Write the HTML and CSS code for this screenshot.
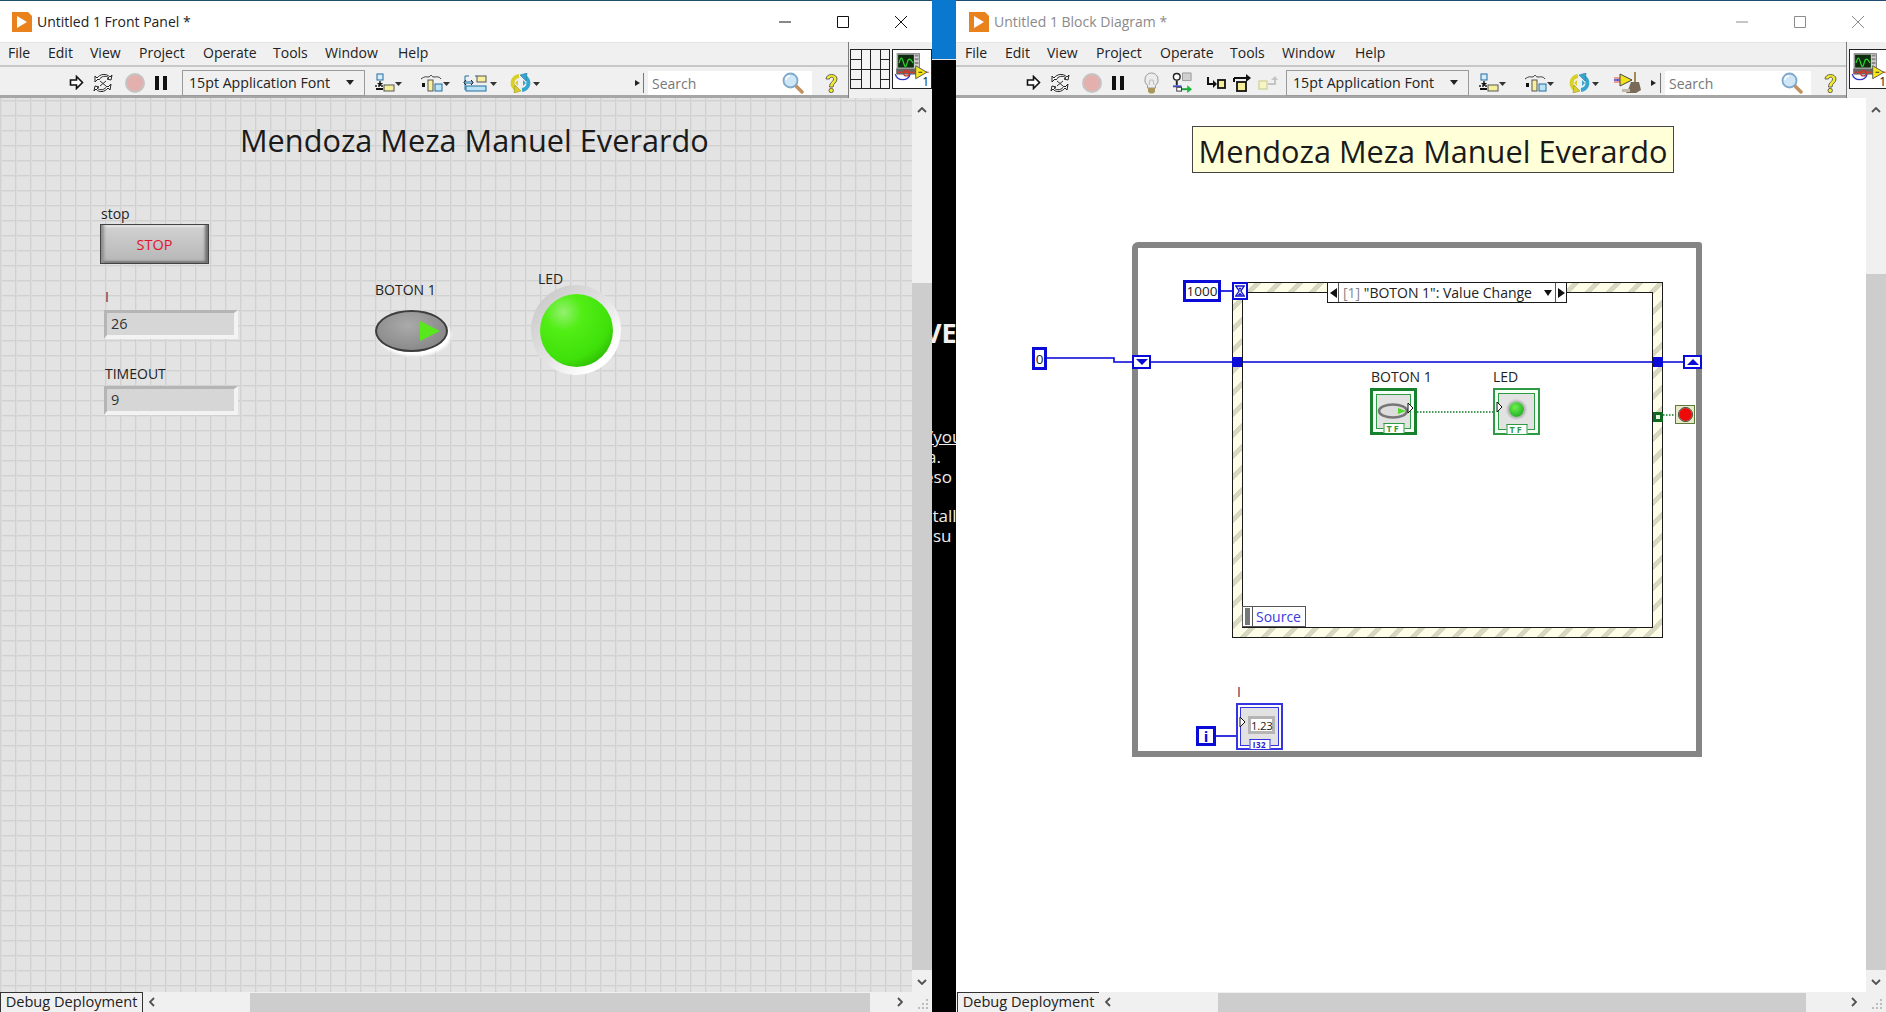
FILE: index.html
```html
<!DOCTYPE html>
<html lang="en">
<head>
<meta charset="utf-8">
<title>LabVIEW</title>
<link rel="stylesheet" href="styles.css">
</head>
<body>
<svg class="defs" width="0" height="0" aria-hidden="true">
  <defs>
    <symbol id="i-app" viewBox="0 0 20 20"><path d="M0 0h16l4 4v16H0z" fill="#e9821c"/><path d="M5 4l10 6-10 6z" fill="#fff"/></symbol>
    <symbol id="i-run" viewBox="0 0 15 15"><path d="M1.5 5h6V1.500l6 6-6 6V10h-6z" fill="#fff" stroke="#111" stroke-width="1.600"/></symbol>
    <symbol id="i-cont" viewBox="0 0 20 20"><path d="M2 9l3-3 1 1C8 3 13 2 16 5l-2 1 4 1 1-5-2 2C13 0 7 1 4 5L2 3z" fill="#fff" stroke="#222"/><path d="M18 11l-3 3-1-1c-2 4-7 5-10 2l2-1-4-1-1 5 2-2c3 4 9 3 12-1l2 2z" fill="#fff" stroke="#222"/><path d="M7 8l6 5M13 8l-6 5" stroke="#333" fill="none"/></symbol>
    <symbol id="i-abort" viewBox="0 0 20 20"><circle cx="10" cy="10" r="9" fill="#e3b0ae" stroke="#c4c4c4" stroke-width="2"/></symbol>
    <symbol id="i-pause" viewBox="0 0 12 14"><path d="M0 0h4v14H0zM8 0h4v14H8z" fill="#111"/></symbol>
    <symbol id="i-bulb" viewBox="0 0 17 22"><path d="M8.500 1a7 7 0 0 0-4 12.500V16h8v-2.500a7 7 0 0 0-4-12.500z" fill="#ececec" stroke="#999"/><path d="M6 13l1-5h3l1 5" fill="none" stroke="#bbb"/><path d="M5 16h7v4l-2 1.500H7L5 20z" fill="#a8985c"/></symbol>
    <symbol id="i-probe" viewBox="0 0 22 22"><circle cx="5" cy="5" r="3.500" fill="#fff" stroke="#222" stroke-width="1.500"/><path d="M5 9v5" stroke="#222" stroke-width="2"/><path d="M1 15h9" stroke="#3a4ed0" stroke-width="2"/><path d="M11 1h9v8h-9z" fill="#d0d0d0" stroke="#999"/><path d="M9 18h8" stroke="#19a33a" stroke-width="2"/><path d="M16 14l5 4-5 4z" fill="#19b53c"/><rect x="5" y="16" width="5" height="4" fill="#fff" stroke="#333"/></symbol>
    <symbol id="i-into" viewBox="0 0 20 14"><path d="M2 1v7h7" fill="none" stroke="#111" stroke-width="2"/><path d="M7 4l4 4-4 4z" fill="#111"/><rect x="12" y="4" width="7" height="8" fill="#f4ee9a" stroke="#111" stroke-width="1.800"/></symbol>
    <symbol id="i-over" viewBox="0 0 19 18"><path d="M1 4h14" stroke="#111" stroke-width="2"/><path d="M13 0l5 4-5 4z" fill="#111"/><path d="M1 4v4" stroke="#111" stroke-width="2"/><rect x="4" y="8" width="9" height="9" fill="#f4ee9a" stroke="#111" stroke-width="1.800"/></symbol>
    <symbol id="i-out" viewBox="0 0 20 16"><rect x="1" y="6" width="8" height="8" fill="#f7f5c4" stroke="#d5d5a8" stroke-width="1.500"/><path d="M10 9h7V4" fill="none" stroke="#c4c4c4" stroke-width="2"/><path d="M13 5l4-4 3 4z" fill="#c4c4c4"/></symbol>
    <symbol id="i-align" viewBox="0 0 28 20"><rect x="2" y="1" width="6" height="6" fill="#d8ecf8" stroke="#1d6f9e"/><path d="M5 8v5M0 13h12" stroke="#222" stroke-width="1.500" stroke-dasharray="2 1"/><path d="M2 10l3 3 3-3z" fill="#111"/><rect x="1" y="15" width="7" height="2" fill="#111"/><rect x="9" y="12" width="10" height="6" fill="#f6ef9c" stroke="#555"/><path d="M20 9h7l-3.500 4z" fill="#333"/></symbol>
    <symbol id="i-dist" viewBox="0 0 30 20"><path d="M1 6c4-3 5-2 7-2s3-2 3-2 1 2 3 2 5-1 7 2" fill="none" stroke="#333"/><rect x="2" y="10" width="3" height="4" fill="#111"/><rect x="8" y="7" width="5" height="11" fill="#f6ef9c" stroke="#555"/><rect x="15" y="11" width="7" height="7" fill="#bfe3f6" stroke="#1d6f9e"/><path d="M23 9h7l-3.500 4z" fill="#333"/></symbol>
    <symbol id="i-size" viewBox="0 0 35 20"><path d="M2 3h4M2 3v14M12 3h2" stroke="#1d6f9e"/><path d="M1 8h9v3H1z" fill="#7ac" /><path d="M3 7l-2 2.500 2 2.500M8 7l2 2.500-2 2.500" stroke="#111" fill="none"/><rect x="3" y="13" width="20" height="5" fill="#bfe3f6" stroke="#1d6f9e"/><rect x="14" y="3" width="9" height="6" fill="#f6ef9c" stroke="#555"/><path d="M27 9h7l-3.500 4z" fill="#333"/></symbol>
    <symbol id="i-order" viewBox="0 0 31 20"><path d="M9 3a7 7 0 0 0-2 13.500" fill="none" stroke="#d8cf2a" stroke-width="4"/><path d="M5 12l6 6-7 2z" fill="#d8cf2a" stroke="#8f8a20" stroke-width=".5"/><path d="M12 17a7 7 0 0 0 2-13.500" fill="none" stroke="#36a6cf" stroke-width="4"/><path d="M16 8l-6-6 7-2z" fill="#36a6cf" stroke="#1b6f96" stroke-width=".5"/><path d="M8 7l-3 3 3 3z" fill="#d8cf2a"/><path d="M13 7l3 3-3 3z" fill="#36a6cf"/><path d="M23 9h7l-3.500 4z" fill="#333"/></symbol>
    <symbol id="i-clean" viewBox="0 0 27 22"><path d="M0 6h8M0 10h8" stroke="#e44" /><path d="M0 8h8" stroke="#3a4ed0" stroke-width="1.500"/><path d="M6 2l12 6-12 6z" fill="#f3e21a" stroke="#444"/><path d="M3 8h1" stroke="#333" /><path d="M20 0h2v11h-2z" fill="#a28a5c"/><path d="M14 18l3-8h8l2 8-5 3H12z" fill="#7a6a58"/><path d="M8 17h8v3H8z" fill="#bfb9ae"/></symbol>
    <symbol id="i-glass" viewBox="0 0 22 22"><path d="M13 13l7 7" stroke="#c2915e" stroke-width="3.500" stroke-linecap="round"/><circle cx="8.500" cy="8.500" r="7" fill="#cfe6f7" stroke="#7fa8cc" stroke-width="1.800"/><path d="M4 8c0-3 2-4 4-4" stroke="#fff" stroke-width="1.500" fill="none"/></symbol>
    <symbol id="i-help" viewBox="0 0 15 20"><path d="M2 6c0-6 11-6 11 0 0 4-4 4-4 8H5.500c0-5 4-5 4-8 0-2.500-3.500-2.500-4 0z" fill="#f4ec2a" stroke="#555" stroke-width=".9"/><circle cx="7.200" cy="17.500" r="2.200" fill="#f4ec2a" stroke="#555" stroke-width=".9"/></symbol>
    <symbol id="i-vi" viewBox="0 0 40 41"><rect x="4" y="4" width="24" height="22" fill="#cfcfcf" stroke="#777"/><rect x="5" y="5" width="17" height="14" fill="#0e2d0e"/><path d="M6 14c2-7 3-7 5 0s3 3 4-1 3-5 6 1" fill="none" stroke="#2fd52f" stroke-width="1.300"/><path d="M23 6h4M23 10h4M23 14h4" stroke="#888" stroke-width="2"/><rect x="3" y="20" width="25" height="6" fill="#666"/><path d="M2 26c2 8 14 8 16 0" fill="none" stroke="#2b35c8" stroke-width="1.400"/><path d="M4 24h34" stroke="#e23a28" stroke-width="1.300"/><circle cx="14" cy="25" r="3" fill="none" stroke="#c9352a" stroke-width="1.300"/><path d="M24 17l12 7-12 7z" fill="#f6e81a" stroke="#555"/><path d="M27 24h4" stroke="#222"/></symbol>
    <symbol id="i-min" viewBox="0 0 12 12"><path d="M0 6h12" stroke="currentColor" fill="none"/></symbol>
    <symbol id="i-max" viewBox="0 0 12 12"><path d="M.5.500h11v11H.5z" stroke="currentColor" fill="none"/></symbol>
    <symbol id="i-close" viewBox="0 0 12 12"><path d="M0 0l12 12M12 0L0 12" stroke="currentColor" fill="none"/></symbol>
    <symbol id="i-up" viewBox="0 0 10 6"><path d="M1 5l4-4 4 4" stroke="#505050" stroke-width="1.800" fill="none"/></symbol>
    <symbol id="i-down" viewBox="0 0 10 6"><path d="M1 1l4 4 4-4" stroke="#505050" stroke-width="1.800" fill="none"/></symbol>
    <symbol id="i-left" viewBox="0 0 6 10"><path d="M5 1L1 5l4 4" stroke="#505050" stroke-width="1.800" fill="none"/></symbol>
    <symbol id="i-right" viewBox="0 0 6 10"><path d="M1 1l4 4-4 4" stroke="#505050" stroke-width="1.800" fill="none"/></symbol>
    <symbol id="i-grip" viewBox="0 0 11 11"><path d="M8 1h2v2H8zM8 5h2v2H8zM8 9h2v2H8zM4 5h2v2H4zM4 9h2v2H4zM0 9h2v2H0z" fill="#bcbcbc"/></symbol>
    <symbol id="i-oval" viewBox="0 0 34 16"><ellipse cx="16" cy="8" rx="14" ry="6.500" fill="#ddd" stroke="#777" stroke-width="2.500"/><path d="M21 5l8 3-8 3z" fill="#4fd82c"/></symbol>
    <symbol id="i-in" viewBox="0 0 7 12"><path d="M1 1l5 5-5 5z" fill="#fff" stroke="#111"/></symbol>
  </defs>
</svg>

<main class="desktop">
  <section class="window">
    <header class="titlebar titlebar-front">
      <svg class="app-icon"><use href="#i-app"/></svg>
      <span class="title-text">Untitled 1 Front Panel *</span>
      <div class="win-controls">
        <svg class="wc"><use href="#i-min"/></svg>
        <svg class="wc"><use href="#i-max"/></svg>
        <svg class="wc"><use href="#i-close"/></svg>
      </div>
    </header>
    <div class="head">
      <div class="head-main">
        <nav class="menubar">
          <span class="menu m-file">File</span><span class="menu m-edit">Edit</span><span class="menu m-view">View</span><span class="menu m-project">Project</span><span class="menu m-operate">Operate</span><span class="menu m-tools">Tools</span><span class="menu m-window">Window</span><span class="menu m-help">Help</span>
        </nav>
        <div class="toolbar">
          <svg class="ti t-run"><use href="#i-run"/></svg>
          <svg class="ti t-cont"><use href="#i-cont"/></svg>
          <svg class="ti t-abort"><use href="#i-abort"/></svg>
          <svg class="ti t-pause"><use href="#i-pause"/></svg>
          <div class="font-select fs-front"><span>15pt Application Font</span><i class="caret"></i></div>
          <svg class="ti t-align"><use href="#i-align"/></svg>
          <svg class="ti t-dist"><use href="#i-dist"/></svg>
          <svg class="ti t-size"><use href="#i-size"/></svg>
          <svg class="ti t-order"><use href="#i-order"/></svg>
          <i class="mini-arrow ma-front"></i>
          <div class="search s-front"><span>Search</span><svg class="ti t-glass"><use href="#i-glass"/></svg></div>
          <svg class="ti t-help"><use href="#i-help"/></svg>
        </div>
      </div>
      <div class="panes">
        <div class="conpane">
          <i class="cl v1"></i><i class="cl v2"></i><i class="cl v3"></i><i class="cl h1"></i><i class="cl h2"></i><i class="cl h3"></i>
        </div>
        <div class="vi-icon"><svg class="vi-svg"><use href="#i-vi"/></svg><span class="vi-num">1</span></div>
      </div>
    </div>
    <div class="body">
      <div class="canvas panel">
        <h1 class="panel-title">Mendoza Meza Manuel Everardo</h1>
        <span class="flabel l-stop">stop</span>
        <div class="stop-btn">STOP</div>
        <span class="flabel l-i">I</span>
        <div class="numeric n-i">26</div>
        <span class="flabel l-timeout">TIMEOUT</span>
        <div class="numeric n-t">9</div>
        <span class="flabel l-boton">BOTON 1</span>
        <div class="oval"><i class="oval-tri"></i></div>
        <span class="flabel l-led">LED</span>
        <div class="led-halo"><div class="led"></div></div>
      </div>
      <div class="vscroll">
        <svg class="chev-v"><use href="#i-up"/></svg>
        <div class="vtrack"><div class="vthumb vt-front"></div></div>
        <svg class="chev-v"><use href="#i-down"/></svg>
      </div>
    </div>
    <footer class="bottom">
      <div class="tab">Debug Deployment</div>
      <svg class="chev-h ch-left"><use href="#i-left"/></svg>
      <div class="hthumb ht-front"></div>
      <svg class="chev-h ch-right-front"><use href="#i-right"/></svg>
      <svg class="grip"><use href="#i-grip"/></svg>
    </footer>
  </section>

  <aside class="strip">
    <div class="strip-blue"></div>
    <div class="strip-line"></div>
    <div class="strip-text st-ve">VE</div>
    <div class="strip-text st-you">/you</div>
    <div class="strip-text st-a">a.</div>
    <div class="strip-text st-eso">eso</div>
    <div class="strip-text st-ntall">ntall</div>
    <div class="strip-text st-su">su</div>
  </aside>

  <section class="window window-diagram">
    <header class="titlebar titlebar-block">
      <svg class="app-icon"><use href="#i-app"/></svg>
      <span class="title-text muted">Untitled 1 Block Diagram *</span>
      <div class="win-controls muted-controls">
        <svg class="wc"><use href="#i-min"/></svg>
        <svg class="wc"><use href="#i-max"/></svg>
        <svg class="wc"><use href="#i-close"/></svg>
      </div>
    </header>
    <div class="head">
      <div class="head-main">
        <nav class="menubar">
          <span class="menu m-file">File</span><span class="menu m-edit">Edit</span><span class="menu m-view">View</span><span class="menu m-project">Project</span><span class="menu m-operate">Operate</span><span class="menu m-tools">Tools</span><span class="menu m-window">Window</span><span class="menu m-help">Help</span>
        </nav>
        <div class="toolbar">
          <svg class="ti t-run"><use href="#i-run"/></svg>
          <svg class="ti t-cont"><use href="#i-cont"/></svg>
          <svg class="ti t-abort"><use href="#i-abort"/></svg>
          <svg class="ti t-pause"><use href="#i-pause"/></svg>
          <svg class="ti t-bulb"><use href="#i-bulb"/></svg>
          <svg class="ti t-probe"><use href="#i-probe"/></svg>
          <svg class="ti t-into"><use href="#i-into"/></svg>
          <svg class="ti t-over"><use href="#i-over"/></svg>
          <svg class="ti t-out"><use href="#i-out"/></svg>
          <div class="font-select fs-block"><span>15pt Application Font</span><i class="caret"></i></div>
          <svg class="ti t-align"><use href="#i-align"/></svg>
          <svg class="ti t-dist"><use href="#i-dist"/></svg>
          <svg class="ti t-order t-order-b"><use href="#i-order"/></svg>
          <svg class="ti t-clean"><use href="#i-clean"/></svg>
          <i class="mini-arrow ma-block"></i>
          <div class="search s-block"><span>Search</span><svg class="ti t-glass"><use href="#i-glass"/></svg></div>
          <svg class="ti t-help"><use href="#i-help"/></svg>
        </div>
      </div>
      <div class="panes panes-block">
        <div class="vi-icon vi-clip"><svg class="vi-svg"><use href="#i-vi"/></svg><span class="vi-num">1</span></div>
      </div>
    </div>
    <div class="body">
      <div class="canvas diagram">
        <div class="free-label">Mendoza Meza Manuel Everardo</div>
        <div class="loop"></div>
        <div class="event"><div class="event-inner"></div></div>

        <svg class="wires" viewBox="0 0 910 894">
          <path d="M91 260h67v4h18" class="w-blue"/>
          <path d="M195 264h532" class="w-blue"/>
          <path d="M265 193h11" class="w-blue"/>
          <path d="M260 638h20" class="w-blue"/>
          <path d="M461 314h80" class="w-green"/>
          <path d="M707 317h12" class="w-green"/>
        </svg>

        <div class="const c-1000">1000</div>
        <div class="timer"><svg viewBox="0 0 12 14" class="timer-svg"><path d="M1 1h10L7 7l4 6H1l4-6z" fill="#fff" stroke="#1010d0" stroke-width="1.600"/><path d="M4 3h4L6 6zM3 12l3-3 3 3z" fill="#1010d0"/></svg></div>
        <div class="const c-0">0</div>
        <div class="sr sr-l"><i class="tri-down"></i></div>
        <div class="sr sr-r"><i class="tri-up"></i></div>
        <i class="tunnel tn-l"></i>
        <i class="tunnel tn-r"></i>

        <div class="selector">
          <span class="sel-btn"><i class="tri-left"></i></span>
          <span class="sel-text"><span class="sel-idx">[1]</span> "BOTON 1": Value Change</span>
          <i class="sel-caret"></i>
          <span class="sel-btn"><i class="tri-right"></i></span>
        </div>

        <span class="dlabel dl-boton">BOTON 1</span>
        <div class="term term-green term-ctl t-boton">
          <svg class="term-oval"><use href="#i-oval"/></svg>
          <svg class="term-in ti-out"><use href="#i-in"/></svg>
          <span class="tag tag-green">TF</span>
        </div>
        <span class="dlabel dl-led">LED</span>
        <div class="term term-green t-led">
          <i class="mini-led"></i>
          <svg class="term-in ti-inp"><use href="#i-in"/></svg>
          <span class="tag tag-green">TF</span>
        </div>

        <i class="g-tunnel"></i>
        <div class="stop-term"><i class="octagon"></i></div>

        <div class="source"><i class="source-grip"></i><span class="source-text">Source</span></div>

        <span class="dlabel dl-i">I</span>
        <div class="i-term">i</div>
        <div class="term term-blue t-i">
          <span class="num-disp">1.23</span>
          <svg class="term-in ti-inp"><use href="#i-in"/></svg>
          <span class="tag tag-blue">I32</span>
        </div>
      </div>
      <div class="vscroll">
        <svg class="chev-v"><use href="#i-up"/></svg>
        <div class="vtrack"><div class="vthumb vt-block"></div></div>
        <svg class="chev-v"><use href="#i-down"/></svg>
      </div>
    </div>
    <footer class="bottom">
      <div class="tab tab-block">Debug Deployment</div>
      <svg class="chev-h ch-left"><use href="#i-left"/></svg>
      <div class="hthumb ht-block"></div>
      <svg class="chev-h ch-right-block"><use href="#i-right"/></svg>
      <svg class="grip"><use href="#i-grip"/></svg>
    </footer>
  </section>
</main>
</body>
</html>
```
FILE: styles.css
```css
* { box-sizing: border-box; }
html, body { margin: 0; padding: 0; height: 100%; }
body { font-family: "Open Sans", "Noto Sans", "Liberation Sans", sans-serif; color: #222; overflow: hidden; background: #000; }
.defs { position: absolute; }
.desktop { display: flex; width: 1886px; height: 1012px; }

.window { width: 932px; height: 1012px; display: flex; flex-direction: column; background: #f0f0f0; overflow: hidden; }
.window-diagram { width: 930px; }

.titlebar { height: 42px; flex: none; display: flex; align-items: center; background: #fff; border-top: 1px solid #1f4f66; padding-left: 12px; }
.titlebar-block { border-top-color: #1f4a72; padding-left: 13px; }
.app-icon { width: 20px; height: 20px; flex: none; }
.title-text { margin-left: 5px; font-size: 14px; color: #222; }
.title-text.muted { color: #8a8a8a; }
.win-controls { margin-left: auto; display: flex; align-items: center; color: #111; padding-right: 25px; gap: 46px; }
.muted-controls { color: #8c8c8c; padding-right: 22px; }
.wc { width: 12px; height: 12px; display: block; }

.head { height: 56px; flex: none; display: flex; border-bottom: 3px solid #a6a6a6; }
.head-main { flex: 1; min-width: 0; display: flex; flex-direction: column; }
.menubar { height: 25px; flex: none; font-size: 14px; color: #222; border-bottom: 2px solid #c8c8c8; border-top: 1px solid #e4e4e4; position: relative; }
.menu { position: absolute; top: 0; line-height: 20px; }
.m-file { left: 8px; } .m-edit { left: 48px; } .m-view { left: 90px; } .m-project { left: 139px; } .m-operate { left: 203px; } .m-tools { left: 273px; } .m-window { left: 325px; } .m-help { left: 398px; }
.window-diagram .menu { margin-left: 1px; }

.toolbar { flex: 1; display: flex; align-items: center; padding: 3px 0 0 69px; min-height: 0; }
.window-diagram .toolbar { padding-left: 70px; }
.ti { display: block; flex: none; }
.t-run { width: 15px; height: 15px; }
.t-cont { width: 20px; height: 20px; margin-left: 9px; }
.t-abort { width: 20px; height: 20px; margin-left: 12px; }
.t-pause { width: 12px; height: 14px; margin-left: 10px; }
.t-bulb { width: 17px; height: 22px; margin-left: 19px; }
.t-probe { width: 21px; height: 21px; margin-left: 12px; }
.t-into { width: 20px; height: 14px; margin-left: 13px; }
.t-over { width: 19px; height: 18px; margin-left: 7px; }
.t-out { width: 20px; height: 16px; margin-left: 6px; }
.t-align { width: 28px; height: 20px; margin-left: 10px; }
.t-dist { width: 30px; height: 20px; margin-left: 17px; }
.t-size { width: 35px; height: 20px; margin-left: 13px; }
.t-order { width: 31px; height: 20px; margin-left: 12px; }
.t-order-b { margin-left: 15px; }
.t-clean { width: 27px; height: 22px; margin-left: 14px; }
.t-glass { width: 22px; height: 22px; }
.t-help { width: 15px; height: 20px; margin-left: 12px; }

.font-select { width: 183px; height: 26px; flex: none; display: flex; align-items: center; justify-content: space-between; border: 1px solid #9a9a9a; font-size: 14.200px; padding: 0 10px 0 6px; color: #222; }
.fs-front { margin-left: 15px; }
.fs-block { margin-left: 8px; }
.caret { width: 0; height: 0; border: 4px solid transparent; border-top: 5px solid #222; border-bottom: 0; }
.mini-arrow { width: 0; height: 0; border: 3.500px solid transparent; border-left: 5px solid #222; border-right: 0; flex: none; }
.ma-front { margin-left: 94px; }
.ma-block { margin-left: 10px; }
.search { height: 24px; flex: none; display: flex; align-items: center; justify-content: space-between; background: #fff; font-size: 14px; color: #777; padding: 1px 8px 0 4px; position: relative; }
.search::before { content: ""; position: absolute; left: -5px; top: 2px; height: 20px; border-left: 1px solid #777; }
.s-front { width: 164px; margin-left: 8px; }
.s-block { width: 146px; margin-left: 9px; }

.panes { width: 84px; flex: none; display: flex; align-items: flex-start; gap: 2px; border-left: 1px solid #7c7c7c; padding: 7px 0 0 1px; background: #f0f0f0; margin-bottom: -3px; }
.panes-block { width: 40px; padding-left: 2px; }
.conpane { width: 40px; height: 40px; border: 1px solid #222; position: relative; background: #f4f4f4; flex: none; }
.cl { position: absolute; background: #222; }
.cl.v1, .cl.v2, .cl.v3 { top: 0; bottom: 0; width: 1px; }
.v1 { left: 10px; } .v2 { left: 19px; } .v3 { left: 29px; }
.cl.h1, .cl.h2, .cl.h3 { left: 0; right: 0; height: 1px; }
.h1 { top: 9px; } .h2 { top: 19px; } .h3 { top: 29px; }
.cl.h1, .cl.h3 { background: linear-gradient(to right, #222 10px, transparent 10px 29px, #222 29px); }
.vi-icon { width: 40px; height: 40px; border: 1px solid #222; background: #fff; position: relative; flex: none; }
.vi-svg { width: 38px; height: 38px; display: block; }
.vi-num { position: absolute; right: 2px; bottom: -1px; font-size: 12px; line-height: 14px; color: #111; }

.body { flex: 1; min-height: 0; display: flex; }
.canvas { flex: 1; min-width: 0; position: relative; overflow: hidden; }
.panel {
  background-color: #e3e3e3;
  background-image: linear-gradient(to right, #d1d1d1 1px, #dcdcdc 1px, #dcdcdc 2px, transparent 2px), linear-gradient(to bottom, #d1d1d1 1px, #dcdcdc 1px, #dcdcdc 2px, transparent 2px);
  background-size: 15px 15px;
  background-position: 0 2px;
}
.diagram { background: #fff; }

.vscroll { width: 20px; flex: none; background: #f0f0f0; display: flex; flex-direction: column; align-items: center; }
.chev-v { width: 10px; height: 6px; flex: none; margin: 9px 0; }
.vtrack { flex: 1; width: 100%; display: flex; flex-direction: column; }
.vthumb { background: #cdcdcd; width: 100%; }
.vt-front { margin-top: 161px; height: 687px; }
.vt-block { margin-top: 152px; height: 696px; }

.bottom { height: 20px; flex: none; display: flex; align-items: center; background: #f0f0f0; position: relative; }
.tab { width: 143px; height: 20px; flex: none; border: 1px solid #333; border-bottom: 0; background: #f0f0f0; font-size: 14.600px; line-height: 17px; text-align: center; color: #222; white-space: nowrap; }
.tab-block { margin-left: 1px; width: 142px; border-right: 0; }
.chev-h { width: 6px; height: 10px; flex: none; }
.ch-left { margin-left: 6px; }
.hthumb { height: 19px; align-self: flex-end; background: #cdcdcd; flex: none; }
.ht-front { width: 620px; margin-left: 95px; }
.ht-block { width: 588px; margin-left: 107px; }
.ch-right-front { margin-left: 27px; }
.ch-right-block { margin-left: 45px; }
.grip { position: absolute; right: 3px; bottom: 3px; width: 11px; height: 11px; }

.strip { width: 24px; flex: none; background: #000; position: relative; overflow: hidden; color: #ececec; }
.strip-blue { height: 59px; background: #0b78d0; }
.strip-line { height: 1px; background: #e8e8e8; }
.strip-text { position: absolute; white-space: nowrap; font-size: 17px; line-height: 20px; }
.st-ve { left: -8px; top: 318px; font-size: 27px; line-height: 30px; font-weight: 700; color: #f0f0f0; }
.st-you { left: -5px; top: 427px; text-decoration: underline; }
.st-a { left: -5px; top: 447px; }
.st-eso { left: -8px; top: 467px; }
.st-ntall { left: -10px; top: 506px; }
.st-su { left: 1px; top: 526px; }

.panel-title { position: absolute; left: 240px; top: 18px; margin: 0; font-size: 30.700px; font-weight: 400; line-height: 48px; color: #1a1a1a; white-space: nowrap; }
.flabel { position: absolute; font-size: 14px; line-height: 18px; color: #222; white-space: nowrap; }
.l-stop { left: 101px; top: 107px; }
.l-i { left: 105px; top: 190px; color: #5b2a56; }
.l-timeout { left: 105px; top: 267px; }
.l-boton { left: 375px; top: 183px; }
.l-led { left: 538px; top: 172px; }

.stop-btn { position: absolute; left: 100px; top: 126px; width: 109px; height: 40px; display: flex; align-items: center; justify-content: center; border: 1px solid #444; font-size: 14.500px; color: #e3122e; background: linear-gradient(#d2d2d2, #b6b6b6); box-shadow: inset 5px 0 3px -2px #8f8f8f, inset -5px 0 3px -2px #6f6f6f, inset 0 -4px 2px -2px #7a7a7a, inset 0 4px 2px -2px #e8e8e8; }
.numeric { position: absolute; left: 104px; width: 134px; height: 29px; background: #d6d6d6; font-size: 14.500px; display: flex; align-items: center; padding: 0 0 2px 4px; color: #333; border-style: solid; border-width: 3px 4px 4px 3px; border-color: #b5b5b5 #f3f3f3 #f3f3f3 #b5b5b5; }
.n-i { top: 212px; }
.n-t { top: 288px; }

.oval { position: absolute; left: 375px; top: 212px; width: 73px; height: 42px; border-radius: 50%; background: radial-gradient(ellipse at 45% 35%, #aaa, #8b8b8b 70%); border: 2px solid #3d3d3d; box-shadow: 3px 4px 3px #fff; }
.oval-tri { position: absolute; left: 43px; top: 9px; width: 0; height: 0; border: 10.500px solid transparent; border-left: 20px solid #58e81c; border-right: 0; }
.led-halo { position: absolute; left: 531px; top: 187px; width: 90px; height: 90px; border-radius: 50%; background: linear-gradient(135deg, #c4c4c4, #e3e3e3 50%, #fff 80%); display: flex; align-items: center; justify-content: center; }
.led { width: 73px; height: 73px; border-radius: 50%; background: radial-gradient(circle at 32% 25%, #94f070 0, #52ee16 25%, #3fe00a 65%, #1e9a04 98%); }

.free-label { position: absolute; left: 236px; top: 28px; width: 482px; height: 47px; background: #ffffd8; border: 1px solid #444; font-size: 30.700px; line-height: 47px; text-align: center; color: #1a1a1a; white-space: nowrap; padding-top: 1px; }
.loop { position: absolute; left: 176px; top: 144px; width: 570px; height: 515px; border: 6px solid #858585; border-radius: 6px 3px 0 0; }
.event { position: absolute; left: 276px; top: 184px; width: 431px; height: 356px; border: 1px solid #1a1a1a; padding: 9px; background: repeating-linear-gradient(135deg, #d8d8c0 0 5px, #fdfde8 5px 15px); }
.event-inner { width: 100%; height: 100%; background: #fff; border: 1px solid #1a1a1a; }
.wires { position: absolute; left: 0; top: 0; width: 910px; height: 894px; }
.w-blue { fill: none; stroke: #0000d8; stroke-width: 1.600; }
.w-green { fill: none; stroke: #0a7a22; stroke-width: 1.500; stroke-dasharray: 1.500 1.500; }

.const { position: absolute; background: #fff; border: 3px solid #0b0bd8; font-size: 13.500px; line-height: 17px; text-align: center; color: #222; }
.c-1000 { left: 227px; top: 182px; width: 38px; height: 22px; }
.c-0 { left: 76px; top: 249px; width: 15px; height: 23px; line-height: 18px; }
.timer { position: absolute; left: 276px; top: 184px; width: 16px; height: 18px; background: #fff; border: 2px solid #0b0bd8; display: flex; align-items: center; justify-content: center; }
.timer-svg { width: 10px; height: 12px; display: block; }
.sr { position: absolute; top: 257px; width: 19px; height: 14px; background: #fff; border: 2px solid #0b0bd8; display: flex; align-items: center; justify-content: center; }
.sr-l { left: 176px; }
.sr-r { left: 727px; }
.tri-down { width: 0; height: 0; border: 6px solid transparent; border-top: 6px solid #0b0bd8; border-bottom: 0; }
.tri-up { width: 0; height: 0; border: 6px solid transparent; border-bottom: 6px solid #0b0bd8; border-top: 0; }
.tunnel { position: absolute; top: 259px; width: 10px; height: 10px; background: #0b0bd8; }
.tn-l { left: 276px; }
.tn-r { left: 697px; }

.selector { position: absolute; left: 371px; top: 184px; width: 240px; height: 21px; background: #fff; border: 1px solid #1a1a1a; display: flex; align-items: center; font-size: 14px; }
.sel-btn { width: 11px; height: 19px; flex: none; display: flex; align-items: center; justify-content: center; background: #fff; }
.sel-btn:first-child { border-right: 1px solid #555; }
.sel-btn:last-child { border-left: 1px solid #555; }
.tri-left { width: 0; height: 0; border: 5px solid transparent; border-right: 7px solid #111; border-left: 0; }
.tri-right { width: 0; height: 0; border: 5px solid transparent; border-left: 7px solid #111; border-right: 0; }
.sel-text { margin-left: 4px; white-space: nowrap; color: #222; line-height: 19px; flex: 1; }
.sel-idx { color: #888; }
.sel-caret { width: 0; height: 0; border: 4.500px solid transparent; border-top: 6px solid #111; border-bottom: 0; margin-right: 3px; }

.dlabel { position: absolute; font-size: 14px; line-height: 18px; color: #222; white-space: nowrap; }
.dl-boton { left: 415px; top: 270px; }
.dl-led { left: 537px; top: 270px; }
.dl-i { left: 281px; top: 585px; color: #5b2a56; }

.term { position: absolute; width: 47px; height: 47px; background: #e2e2e2; display: flex; align-items: center; justify-content: center; }
.term-green { border: 2px solid #2f9a45; box-shadow: inset 0 0 0 3px #f6fff6, inset 0 0 0 4px #2f9a45; }
.term-ctl { border-width: 3px; border-color: #17822d; }
.term-blue { border: 2px solid #3434e0; box-shadow: inset 0 0 0 2px #fff, inset 0 0 0 3px #3434e0; }
.t-boton { left: 414px; top: 290px; }
.t-led { left: 537px; top: 290px; }
.t-i { left: 280px; top: 605px; }
.term-oval { width: 34px; height: 16px; margin-top: -2px; }
.term-in { position: absolute; width: 7px; height: 12px; top: 11px; }
.ti-out { right: 0; }
.ti-inp { left: 1px; }
.tag { position: absolute; bottom: -1px; left: 50%; transform: translateX(-50%); width: 21px; height: 10px; background: #fff; border-width: 1px 1px 0; border-style: solid; font-size: 9px; line-height: 9px; font-weight: 700; text-align: center; letter-spacing: 2px; }
.tag-green { color: #2f9a45; border-color: #2f9a45; }
.tag-blue { color: #2020d0; border-color: #3434e0; font-size: 8px; letter-spacing: .5px; }
.mini-led { width: 15px; height: 15px; border-radius: 50%; margin-top: -4px; background: radial-gradient(circle at 40% 35%, #6cf04c, #2bb52b 70%, #8e8e8e 100%); box-shadow: 0 0 2px 2px #b5b5b5; }
.num-disp { background: #fff; border: 3px solid #b5b5b5; font-size: 11.500px; line-height: 13px; width: 27px; height: 18px; text-align: center; margin: -4px 0 0 4px; color: #222; letter-spacing: -.3px; }

.g-tunnel { position: absolute; left: 697px; top: 314px; width: 10px; height: 10px; background: #0d6a1e; border: 3px solid #0d6a1e; box-shadow: inset 0 0 0 2px #e8f5e8; }
.stop-term { position: absolute; left: 719px; top: 307px; width: 20px; height: 19px; background: #e9e9c8; border: 1px solid #5d7a3c; display: flex; align-items: center; justify-content: center; }
.octagon { width: 13px; height: 13px; background: #ef0a0a; border-radius: 50%; outline: 1px solid #333; }

.source { position: absolute; left: 286px; top: 508px; width: 64px; height: 21px; display: flex; background: #fff; border: 1px solid #555; }
.source-grip { width: 10px; flex: none; background: #fff; border-right: 1px solid #555; position: relative; }
.source-grip::after { content: ""; position: absolute; left: 2px; top: 1px; bottom: 1px; width: 5px; background: #777; }
.source-text { font-size: 14px; line-height: 19px; color: #3a3ae0; margin-left: 3px; }

.i-term { position: absolute; left: 240px; top: 628px; width: 20px; height: 20px; background: #fff; border: 3px solid #0b0bd8; font-size: 15px; font-weight: 700; line-height: 14px; text-align: center; color: #0b0bd8; }
```
